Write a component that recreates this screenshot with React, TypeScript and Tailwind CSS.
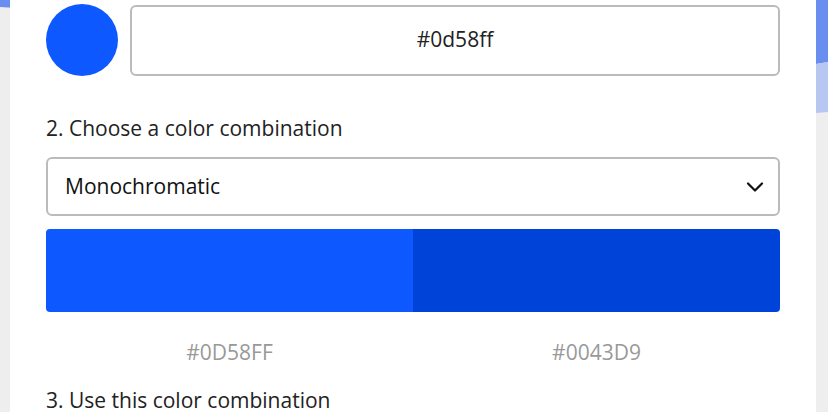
import { ChevronDown } from "lucide-react";

const swatches = [
  { hex: "#0D58FF", bg: "bg-[#0d58ff]" },
  { hex: "#0043D9", bg: "bg-[#0043d9]" },
];

export default function App() {
  return (
    <div className="relative w-[828px] h-[412px] overflow-hidden bg-[#eeeeee] font-['Open_Sans',sans-serif]">
      {/* background waves behind the card */}
      <svg className="absolute inset-0" width="828" height="412" viewBox="0 0 828 412">
        <path d="M0 0 H828 V62 L816 64 C500 40 100 12 0 7 Z" fill="#6a8ef0" />
        <path d="M816 64 L828 62 V112 L816 113 Z" fill="#b7c7f2" />
      </svg>

      <div className="relative ml-[10px] w-[806px] h-full bg-white px-9 pt-1">
        <div className="flex items-center gap-3">
          <div className="w-[72px] h-[72px] rounded-full bg-[#0d58ff] shrink-0" />
          <div className="flex-1 h-[71px] rounded-md border-2 border-[#bbbbbb] flex items-center justify-center text-[21px] text-[#222]">
            #0d58ff
          </div>
        </div>

        <p className="mt-[39px] text-[21px] text-[#222] leading-[27px]">2. Choose a color combination</p>

        <div className="mt-[15px] h-[59px] rounded-md border-2 border-[#bbbbbb] flex items-center justify-between pl-[17px] pr-[9px] text-[21px] text-[#111]">
          <span>Monochromatic</span>
          <ChevronDown className="w-[28px] h-[28px] text-[#111]" strokeWidth={1.9} />
        </div>

        <div className="mt-[13px] h-[83px] rounded flex overflow-hidden">
          {swatches.map((s) => (
            <div key={s.hex} className={`flex-1 ${s.bg}`} />
          ))}
        </div>

        <div className="flex mt-[27px]">
          {swatches.map((s) => (
            <div key={s.hex} className="flex-1 text-center text-[21px] text-[#999] leading-[27px]">
              {s.hex}
            </div>
          ))}
        </div>

        <p className="mt-[21px] text-[21px] text-[#222] leading-[27px]">3. Use this color combination</p>
      </div>
    </div>
  );
}
